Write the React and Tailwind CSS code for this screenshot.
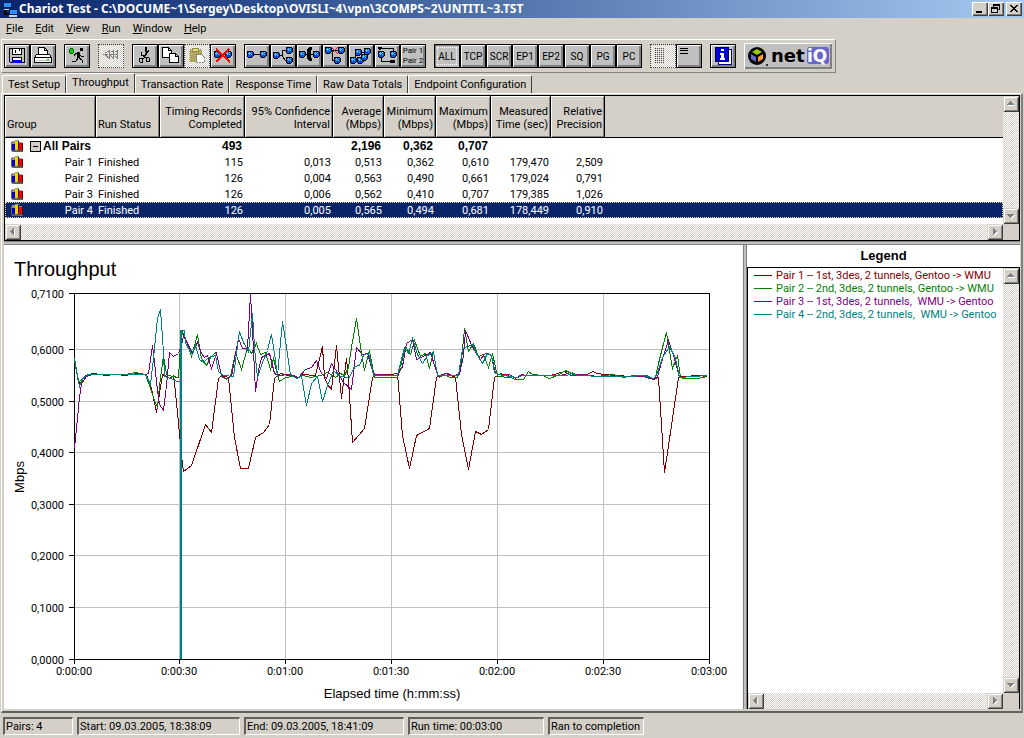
import { useState } from 'react';

const MENUS = ['File', 'Edit', 'View', 'Run', 'Window', 'Help'];
const TABS = ['Test Setup', 'Throughput', 'Transaction Rate', 'Response Time', 'Raw Data Totals', 'Endpoint Configuration'];
const FILTERS = ['ALL', 'TCP', 'SCR', 'EP1', 'EP2', 'SQ', 'PG', 'PC'];

const COLUMNS = [
  { label: 'Timing Records\nCompleted', width: 'w-[85px]' },
  { label: '95% Confidence\nInterval', width: 'w-[88px]' },
  { label: 'Average\n(Mbps)', width: 'w-[51px]' },
  { label: 'Minimum\n(Mbps)', width: 'w-[52px]' },
  { label: 'Maximum\n(Mbps)', width: 'w-[55px]' },
  { label: 'Measured\nTime (sec)', width: 'w-[60px]' },
  { label: 'Relative\nPrecision', width: 'w-[54px]' },
];

const TOTALS = ['493', '', '2,196', '0,362', '0,707', '', ''];

const PAIRS = [
  { name: 'Pair 1', values: ['115', '0,013', '0,513', '0,362', '0,610', '179,470', '2,509'] },
  { name: 'Pair 2', values: ['126', '0,004', '0,563', '0,490', '0,661', '179,024', '0,791'] },
  { name: 'Pair 3', values: ['126', '0,006', '0,562', '0,410', '0,707', '179,385', '1,026'] },
  { name: 'Pair 4', values: ['126', '0,005', '0,565', '0,494', '0,681', '178,449', '0,910'] },
];

const LEGEND = [
  { text: 'Pair 1 -- 1st, 3des, 2 tunnels, Gentoo -> WMU', color: 'text-[#800000]' },
  { text: 'Pair 2 -- 2nd, 3des, 2 tunnels, Gentoo -> WMU', color: 'text-[#008000]' },
  { text: 'Pair 3 -- 1st, 3des, 2 tunnels,  WMU -> Gentoo', color: 'text-[#800080]' },
  { text: 'Pair 4 -- 2nd, 3des, 2 tunnels,  WMU -> Gentoo', color: 'text-[#008080]' },
];

const STATUS = [
  { text: 'Pairs: 4', width: 'w-[70px]' },
  { text: 'Start: 09.03.2005, 18:38:09', width: 'w-[163px]' },
  { text: 'End: 09.03.2005, 18:41:09', width: 'w-[160px]' },
  { text: 'Run time: 00:03:00', width: 'w-[136px]' },
  { text: 'Ran to completion', width: 'w-[96px]' },
];

// y position of every gridline and its label
const Y_TICKS = [
  [293, '0,7100'], [349, '0,6000'], [401, '0,5000'], [452, '0,4000'],
  [504, '0,3000'], [555, '0,2000'], [607, '0,1000'], [659, '0,0000'],
];
const X_TICKS = [
  [74, '0:00:00'], [179, '0:00:30'], [285, '0:01:00'], [391, '0:01:30'],
  [497, '0:02:00'], [603, '0:02:30'], [709, '0:03:00'],
];

const SERIES = [
  {
    color: '#800000',
    points: '74,361 79,384 85,375 92,373 100,374 105,375 115,374 125,375 136,373 146,374 151,388 156,412 162,374 166,376 169,378 173,375 174,382 179,433 181,455 183,471 191,465 205,424 211,432 218,378 221,375 228,377 234,437 240,468 248,468 255,437 263,432 269,424 274,378 280,373 288,375 298,377 302,374 315,375 322,346 324,377 327,384 331,389 336,345 341,398 346,358 348,380 352,442 364,428 372,377 375,375 390,374 397,373 402,435 409,468 416,435 429,428 436,377 438,375 447,373 455,377 461,434 468,469 475,431 481,434 488,429 494,377 500,373 510,376 517,377 522,375 550,375 564,371 571,375 587,374 592,371 597,373 603,374 630,376 647,376 653,379 658,377 664,472 671,425 678,377 683,376 698,375 707,376',
  },
  {
    color: '#008000',
    points: '74,360 78,382 85,376 92,374 105,374 125,374 135,372 145,374 150,388 154,400 157,407 159,385 163,355 166,374 172,376 178,377 180,345 182,331 185,338 191,356 197,334 201,358 206,365 210,357 215,352 217,357 221,376 226,379 230,376 235,352 241,369 247,347 251,353 256,343 260,354 265,352 270,369 273,358 276,370 279,381 285,377 292,376 298,377 303,375 310,377 320,375 327,372 335,377 340,373 344,375 348,367 351,347 356,318 361,353 364,370 367,357 369,351 374,377 397,377 400,367 405,346 410,354 414,340 420,356 425,353 429,368 433,351 437,375 439,377 443,374 450,377 457,377 460,370 464,328 468,351 473,343 478,356 483,354 488,367 492,353 497,376 510,377 515,379 523,379 528,371 532,374 542,375 549,378 557,375 565,370 573,374 583,374 597,376 613,374 623,377 633,375 647,375 653,379 655,377 658,363 662,347 666,332 669,350 672,368 677,355 680,377 683,378 697,378 702,377 706,376',
  },
  {
    color: '#800080',
    points: '74,448 79,397 81,383 86,376 92,374 105,374 145,374 148,373 152,345 154,362 157,390 159,404 163,410 166,385 169,352 173,356 178,353 181,345 183,335 187,343 192,353 197,342 201,353 204,357 207,355 211,368 216,353 221,375 225,378 231,376 235,353 238,338 242,348 247,348 250,294 252,330 255,391 258,370 261,357 269,353 274,373 278,375 290,374 298,377 305,369 311,367 316,360 321,373 326,378 331,363 337,372 343,382 351,389 353,373 356,347 362,354 367,353 371,367 374,374 397,375 402,366 406,343 412,339 416,359 423,356 430,352 435,368 438,376 445,373 452,375 459,374 463,355 465,330 472,347 480,359 485,353 491,355 495,373 503,375 509,374 515,378 521,374 525,375 560,375 567,373 571,375 583,374 597,376 617,376 643,376 653,379 657,376 663,355 668,340 673,355 679,377 690,376 707,375',
  },
  {
    color: '#008080',
    points: '74,358 79,386 83,377 88,374 105,374 145,374 150,384 153,358 157,318 160,309 163,352 164,376 170,378 177,381 181,381 181,330 184,330 185,343 192,354 195,345 199,359 203,362 208,357 215,355 218,371 223,375 233,376 236,353 239,331 243,342 248,351 252,313 254,347 257,377 262,362 267,350 271,334 275,360 277,376 279,353 282,321 286,347 290,375 297,378 301,375 306,405 311,383 317,376 322,401 327,385 333,370 340,376 349,377 354,366 359,365 363,355 368,352 373,375 397,375 400,363 404,347 408,353 412,338 417,354 422,363 427,355 433,352 437,375 458,375 462,348 472,344 477,355 482,363 487,353 491,355 494,372 498,374 510,376 517,377 522,375 567,375 572,372 577,375 603,376 630,376 643,375 653,378 656,375 662,357 669,346 675,358 679,377 693,376 707,375',
  },
];

function Node({ x, y }) {
  return (
    <g>
      <path d={`M${x - 2} ${y - 3}h4l1 1v4l-1 1h-4l-1 -1v-4z`} fill="#0a50e0" stroke="#000" />
      <path d={`M${x - 2} ${y - 1}h1v-1h1v1h1v-1h1v1h-1v1h1v1h-1v-1h-1v1h-1v-1h-1z`} fill="#50c0ff" />
    </g>
  );
}

const ICONS = {
  Save: (
    <>
      <path d="M4.5 3.5h15v14h-14l-1 -1z" fill="#c0c0c0" stroke="#000" />
      <path d="M7.5 3.5h9v6h-9z" fill="#fff" stroke="#000" />
      <path d="M10.5 5v3M14.5 4v2" stroke="#000" />
      <path d="M7.5 12.5h9v5h-9z" fill="#fff" stroke="#000" />
      <path d="M8 15h8v3h-8z" fill="#0000ff" />
    </>
  ),
  Print: (
    <>
      <path d="M7.5 10.5v-8h6l3 3v5" fill="#fff" stroke="#000" />
      <path d="M13.5 2.5v3h3" fill="none" stroke="#000" />
      <path d="M3.5 12.5l2 -3h13l2 3v5h-17z" fill="#fff" stroke="#000" />
      <path d="M4 12.5h16" stroke="#000" />
      <path d="M5 15.5h14" stroke="#c0c0c0" />
      <path d="M16 14h2v1h-2z" fill="#00c000" />
    </>
  ),
  Run: (
    <>
      <circle cx="6.5" cy="6" r="2.5" fill="#00d000" stroke="#006000" />
      <path d="M15 3h3v3h-3z" fill="#000" />
      <path d="M13.5 7v6M14 8.5h-3l-2 2M14 9l2 2h3M14 13l3 2v3M13 13l-2 3h-4" fill="none" stroke="#000" />
      <path d="M12 7h3v6h-3z" fill="#000" />
    </>
  ),
  Stop: (
    <path d="M4 9.5h5M6 8l4 -2v7l-4 -3M10 9.5h4M12 7l2 -1v7l-3 -3M15 9.5h3M16 7l2 -1v7l-2 -2" fill="none" stroke="#808080" />
  ),
  Cut: (
    <>
      <path d="M13.5 2v5l-3 7M12.5 2v5M8.5 7v3l5 3M16 5l-3 5h-5" fill="none" stroke="#000" />
      <path d="M6.5 13.5h3v4h-2l-1 -1zM13.5 12.5h2l1 1v3h-3z" fill="none" stroke="#000" />
    </>
  ),
  Copy: (
    <>
      <path d="M3.5 2.5h6l3 3v7h-9z" fill="#fff" stroke="#000" />
      <path d="M9.5 2.5v3h3" fill="none" stroke="#000" />
      <path d="M10.5 8.5h6l3 3v6h-9z" fill="#fff" stroke="#000" />
      <path d="M16.5 8.5v3h3" fill="none" stroke="#000" />
    </>
  ),
  Paste: (
    <>
      <path d="M4.5 4.5h12v12h-12z" fill="#b0a860" stroke="#a8a050" strokeDasharray="1 1" />
      <path d="M7.5 3.5h6v3h-6z" fill="#e8e080" stroke="#908840" />
      <path d="M11.5 9.5h5l3 3v5h-8z" fill="#fff" stroke="#808080" strokeDasharray="2 1" />
    </>
  ),
  Delete: (
    <>
      <path d="M6 9h11" stroke="#000" />
      <Node x={6} y={9} />
      <Node x={17} y={9} />
      <path d="M5 4l14 13M18 4l-13 13" stroke="#ff0000" strokeWidth="2" />
    </>
  ),
  'Add pair': (
    <>
      <path d="M5 9.5h14" stroke="#000" />
      <Node x={5} y={9} />
      <Node x={18} y={9} />
    </>
  ),
  'Add multicast group': (
    <>
      <path d="M6 10.5h5v-5h7M11 10l3 5h4" fill="none" stroke="#000" />
      <Node x={5} y={10} />
      <Node x={18} y={5} />
      <Node x={18} y={15} />
    </>
  ),
  'Add VoIP pair': (
    <>
      <path d="M5 9.5h14" stroke="#000" />
      <path d="M12 2h3v3h-1v8h1v3h-3l-2 -3v-8z" fill="#000" />
      <Node x={5} y={9} />
      <Node x={19} y={9} />
    </>
  ),
  'Remove pair': (
    <>
      <path d="M6 5.5h12M9.5 6v9h5" fill="none" stroke="#000" />
      <Node x={5} y={5} />
      <Node x={18} y={5} />
      <Node x={14} y={15} />
      <path d="M8 2l7 7M15 2l-7 7" stroke="#ff0000" />
    </>
  ),
  'Replicate pairs': (
    <>
      <path d="M4 15l5 -8h9l-5 8z" fill="none" stroke="#000" />
      <Node x={4} y={15} />
      <Node x={11} y={15} />
      <Node x={9} y={7} />
      <Node x={18} y={6} />
      <Node x={15} y={12} />
    </>
  ),
  'Swap endpoints': (
    <>
      <path d="M3 3.5h15.5v3M6.5 13v3.5h12" fill="none" stroke="#000" />
      <path d="M3 2h4l-2 4zM15 15h5v3h-5z" fill="#000" />
      <Node x={6} y={9} />
      <Node x={18} y={9} />
    </>
  ),
  'Grid view': (
    <path d="M4 3.5h9M4 5.5h9M4 7.5h9M4 9.5h9M4 11.5h9M4 13.5h9M4 15.5h9M4 17.5h9" stroke="#505050" strokeDasharray="1 1" />
  ),
  'List view': <path d="M3 3.5h8M3 5.5h8M3 8.5h8" stroke="#000" />,
  About: (
    <>
      <path d="M7 4h13v15h-13z" fill="#fff" stroke="#000080" />
      <path d="M4.5 2.5h13v14h-13z" fill="#0000d8" stroke="#000040" />
      <path d="M10 4h3v2h-3zM9 8h4v5h1v2h-5v-2h1v-3h-1z" fill="#fff" />
    </>
  ),
};

function ToolButton({ label, disabled, pressed, children, onClick }) {
  const face = disabled
    ? 'border-dotted border-[#404040] bg-[repeating-conic-gradient(#fff_0_25%,#d4d0c8_0_50%)] bg-[length:2px_2px]'
    : 'border-black bg-[#c0c0c0]';
  const bevel = disabled ? '' : pressed
    ? 'shadow-[inset_1px_1px_0_#808080]'
    : 'shadow-[inset_1px_1px_0_#fff,inset_-2px_-2px_0_#808080]';
  return (
    <button
      type="button"
      aria-label={label}
      disabled={disabled}
      onClick={onClick}
      className={`relative flex h-6 w-[26px] items-center justify-center border ${face} ${bevel}`}
    >
      {children || (
        <svg viewBox="0 0 24 22" className="h-[22px] w-6 shrink-0" shapeRendering="crispEdges">{ICONS[label]}</svg>
      )}
      {pressed && <span className="absolute inset-[2px] border border-dotted border-white"></span>}
    </button>
  );
}

const ARROWS = {
  up: 'M4 9l3 -4h1l3 4z',
  down: 'M4 6h7l-3 4h-1z',
  left: 'M9 4v7l-4 -3v-1z',
  right: 'M6 4v7l4 -3v-1z',
};

function ScrollButton({ dir }) {
  return (
    <button
      type="button"
      aria-label={`Scroll ${dir}`}
      className="h-4 w-4 shrink-0 bg-[#d4d0c8] shadow-[inset_1px_1px_0_#d4d0c8,inset_-1px_-1px_0_#404040,inset_2px_2px_0_#fff,inset_-2px_-2px_0_#808080]"
    >
      <svg viewBox="0 0 16 16" className="h-4 w-4" shapeRendering="crispEdges">
        <path d={ARROWS[dir]} fill="#fff" transform="translate(1 1)" />
        <path d={ARROWS[dir]} fill="#808080" />
      </svg>
    </button>
  );
}

function ScrollBar({ vertical }) {
  return (
    <div className={`flex justify-between bg-[repeating-conic-gradient(#fff_0_25%,#d4d0c8_0_50%)] bg-[length:2px_2px] ${vertical ? 'w-4 flex-col' : 'h-4'}`}>
      <ScrollButton dir={vertical ? 'up' : 'left'} />
      <ScrollButton dir={vertical ? 'down' : 'right'} />
    </div>
  );
}

function BarsIcon() {
  return (
    <svg viewBox="0 0 12 12" className="h-3 w-3 shrink-0" shapeRendering="crispEdges">
      <path d="M0 2h1v8h11v2h-11l-1 -1z" fill="#606060" />
      <path d="M1 1h3v3h-3zM4 0h4v2h-4zM8 2h3v2h-3z" fill="#909090" />
      <path d="M1 4h3v6h-3z" fill="#0000e0" />
      <path d="M4 1h3v9h-3z" fill="#e8d800" />
      <path d="M8 3h3v7h-3z" fill="#f00000" />
      <path d="M7 1h1v9h-1zM11 3h1v8h-1z" fill="#301000" />
    </svg>
  );
}

function TitleBar() {
  const button = 'flex h-[14px] w-4 items-center justify-center bg-[#d4d0c8] shadow-[inset_1px_1px_0_#fff,inset_-1px_-1px_0_#404040,inset_-2px_-2px_0_#808080]';
  return (
    <header className="flex h-[18px] items-center bg-linear-to-r from-[#0a246a] to-[#a6caf0] pr-[2px] pl-[2px]">
      <svg viewBox="0 0 16 16" className="mr-px h-4 w-4" shapeRendering="crispEdges">
        <path d="M1 1h8v5h-8z" fill="#3090ff" stroke="#002060" />
        <path d="M2 8h7v1h-7z" fill="#d4d0c8" />
        <path d="M3 9v4h4" fill="none" stroke="#000" strokeWidth="2" />
        <path d="M7 8h8v5h-8z" fill="#3090ff" stroke="#002060" />
        <path d="M7 14h8v2h-8z" fill="#d4d0c8" />
      </svg>
      <h1 className="flex-1 truncate font-['Noto_Sans'] text-[12px] leading-[16px] font-bold text-white">
        Chariot Test - C:\DOCUME~1\Sergey\Desktop\OVISLI~4\vpn\3COMPS~2\UNTITL~3.TST
      </h1>
      <button type="button" aria-label="Minimize" className={button}>
        <svg viewBox="0 0 16 14" className="h-[14px] w-4" shapeRendering="crispEdges"><path d="M4 9h6v2h-6z" /></svg>
      </button>
      <button type="button" aria-label="Restore" className={button}>
        <svg viewBox="0 0 16 14" className="h-[14px] w-4" shapeRendering="crispEdges">
          <path d="M5.5 6v-3.5h6v5h-2M3.5 5.5h6v5h-6zM5 3h7M3 6.5h7" fill="none" stroke="#000" />
        </svg>
      </button>
      <button type="button" aria-label="Close" className={`ml-[2px] ${button}`}>
        <svg viewBox="0 0 16 14" className="h-[14px] w-4" shapeRendering="crispEdges">
          <path d="M4 3l7 7M5 3l7 7M11 3l-7 7M12 3l-7 7" stroke="#000" />
        </svg>
      </button>
    </header>
  );
}

function ToolBar({ filter, setFilter }) {
  return (
    <div role="toolbar" className="mx-px mt-px flex h-[34px] w-fit items-center gap-2 border border-[#808080] border-t-white border-l-white pr-[3px] pl-[2px]">
      <div className="flex">
        <ToolButton label="Save" />
        <ToolButton label="Print" />
      </div>
      <ToolButton label="Run" />
      <ToolButton label="Stop" disabled />
      <div className="flex">
        <ToolButton label="Cut" />
        <ToolButton label="Copy" />
        <ToolButton label="Paste" disabled />
        <ToolButton label="Delete" />
      </div>
      <div className="flex">
        <ToolButton label="Add pair" />
        <ToolButton label="Add multicast group" />
        <ToolButton label="Add VoIP pair" />
        <ToolButton label="Remove pair" />
        <ToolButton label="Replicate pairs" />
        <ToolButton label="Swap endpoints" />
        <ToolButton label="Pair names">
          <span className="text-[8px] leading-[10px] whitespace-nowrap">Pair 1<br />Pair 2</span>
        </ToolButton>
      </div>
      <div className="flex">
        {FILTERS.map((name) => (
          <ToolButton key={name} label={name} pressed={filter === name} onClick={() => setFilter(name)}>
            <span className="text-[10px]">{name}</span>
          </ToolButton>
        ))}
      </div>
      <div className="flex">
        <ToolButton label="Grid view" disabled />
        <ToolButton label="List view" />
      </div>
      <ToolButton label="About" />
      <button type="button" aria-label="NetIQ" className="h-[26px] w-[88px] bg-[#c0c0c0] shadow-[inset_1px_1px_0_#fff,inset_-2px_-2px_0_#808080]">
        <svg viewBox="0 0 88 26" className="h-[26px] w-[88px]">
          <circle cx="13" cy="13" r="9" fill="#000" />
          <path d="M13 6l5 3l-5 3l-5 -3z" fill="#99cc00" />
          <path d="M7 11l5 3v5l-5 -3z" fill="#6666cc" />
          <path d="M19 11l-5 3v5l5 -3z" fill="#ff9933" />
          <circle cx="23" cy="22" r="1" fill="#000" />
          <text x="27" y="19" className="font-['DejaVu_Sans'] text-[18px] font-bold">net</text>
          <rect x="63" y="4" width="22" height="17" rx="3" fill="#6666cc" />
          <text x="63" y="19" fill="#fff" className="font-['DejaVu_Sans'] text-[17px] font-bold">iQ</text>
        </svg>
      </button>
    </div>
  );
}

function ResultsTable({ selected, setSelected }) {
  const th = 'h-[42px] border-r border-b border-black bg-[#d4d0c8] px-[2px] pb-[6px] align-bottom font-normal whitespace-pre-line shadow-[inset_1px_1px_0_#fff,inset_-1px_-1px_0_#808080]';
  return (
    <div className="grid grid-cols-[1fr_16px] border border-black bg-white">
      <div className="overflow-hidden pb-[6px]">
        <table className="w-full table-fixed border-separate border-spacing-0 leading-[13px]">
          <thead>
            <tr>
              <th className={`w-[91px] text-left ${th}`}>Group</th>
              <th className={`w-16 text-left ${th}`}>Run Status</th>
              {COLUMNS.map((col) => (
                <th key={col.label} className={`text-right ${col.width} ${th}`}>{col.label}</th>
              ))}
              <th aria-label="Empty" className="border-b border-black bg-[#d4d0c8]"></th>
            </tr>
          </thead>
          <tbody>
            <tr className="h-4 font-['Liberation_Sans'] text-[12px] font-bold">
              <td className="p-0">
                <div className="flex items-center pl-[6px]">
                  <BarsIcon />
                  <button type="button" aria-label="Collapse group" className="ml-[7px] flex h-[11px] w-[11px] shrink-0 items-center justify-center border border-black bg-[#d4d0c8]">
                    <span className="h-px w-[5px] bg-black"></span>
                  </button>
                  <span className="ml-[2px] whitespace-nowrap">All Pairs</span>
                </div>
              </td>
              <td></td>
              {TOTALS.map((value, i) => <td key={i} className="p-0 pr-[3px] text-right">{value}</td>)}
              <td></td>
            </tr>
            {PAIRS.map((pair) => (
              <tr
                key={pair.name}
                onClick={() => setSelected(pair.name)}
                className={`h-4 ${selected === pair.name ? 'bg-[#0a246a] text-white outline-1 -outline-offset-1 outline-[#f5db95] outline-dotted' : ''}`}
              >
                <td className="p-0">
                  <div className="flex items-center justify-between pr-[3px] pl-[6px]"><BarsIcon />{pair.name}</div>
                </td>
                <td className="p-0 pl-[2px]">Finished</td>
                {pair.values.map((value, i) => <td key={i} className="p-0 pr-[2px] text-right">{value}</td>)}
                <td></td>
              </tr>
            ))}
          </tbody>
        </table>
      </div>
      <ScrollBar vertical />
      <ScrollBar />
      <div className="bg-[#d4d0c8]"></div>
    </div>
  );
}

function Chart() {
  return (
    <svg viewBox="4 245 739 464" className="block h-auto w-full" role="img" aria-label="Throughput chart">
      <text x="14" y="276" className="font-['Liberation_Sans'] text-[20px]">Throughput</text>
      <g shapeRendering="crispEdges" stroke="#c0c0c0" fill="none">
        {Y_TICKS.slice(1, -1).map(([y]) => <path key={y} d={`M75 ${y}.5H711`} />)}
        {X_TICKS.slice(1, -1).map(([x]) => <path key={x} d={`M${x}.5 294V659`} />)}
      </g>
      <g shapeRendering="crispEdges" stroke="#000" fill="none">
        {Y_TICKS.map(([y]) => <path key={y} d={`M69 ${y}.5H74`} />)}
        {X_TICKS.map(([x]) => <path key={x} d={`M${x}.5 659V664`} />)}
        <path d="M74.5 293.5H709.5V659.5H74.5z" />
      </g>
      <g fill="none" shapeRendering="crispEdges">
        {SERIES.map((s) => (
          <polyline key={s.color} points={s.points} stroke={s.color} transform="translate(0.5 0.5)" />
        ))}
        <path d="M180.5 330V659" stroke="#008080" strokeWidth="2" />
      </g>
      {Y_TICKS.map(([y, label]) => (
        <text key={y} x="64" y={y + 5} textAnchor="end" className="text-[11px]">{label}</text>
      ))}
      {X_TICKS.map(([x, label]) => (
        <text key={x} x={x} y="675" textAnchor="middle" className="text-[11px]">{label}</text>
      ))}
      <text x="392" y="698" textAnchor="middle" className="font-['Liberation_Sans'] text-[13px]">Elapsed time (h:mm:ss)</text>
      <text x="24" y="477" textAnchor="middle" transform="rotate(-90 24 477)" className="font-['Liberation_Sans'] text-[13px]">Mbps</text>
    </svg>
  );
}

function Legend() {
  return (
    <aside className="flex w-[273px] shrink-0 flex-col bg-white">
      <h2 className="h-[22px] text-center font-['Liberation_Sans'] text-[13px] leading-[22px] font-bold">Legend</h2>
      <div className="grid flex-1 grid-cols-[1fr_16px] grid-rows-[1fr_16px] border-t border-r border-l border-black">
        <ul className="overflow-hidden pt-px pl-[6px] leading-[13px]">
          {LEGEND.map((item) => (
            <li key={item.text} className={`flex items-center gap-1 whitespace-pre ${item.color}`}>
              <span className="w-[18px] shrink-0 border-t border-current"></span>
              {item.text}
            </li>
          ))}
        </ul>
        <ScrollBar vertical />
        <ScrollBar />
        <div className="bg-[#d4d0c8]"></div>
      </div>
    </aside>
  );
}

export default function App() {
  const [tab, setTab] = useState('Throughput');
  const [filter, setFilter] = useState('ALL');
  const [selected, setSelected] = useState('Pair 4');

  return (
    <div className="flex min-h-screen flex-col bg-[#d4d0c8] font-[Roboto,Arial,sans-serif] text-[11px] leading-[13px] text-black">
      <TitleBar />

      <nav className="flex h-5 items-center">
        {MENUS.map((name) => (
          <button key={name} type="button" className="px-[6px]">
            <span className="underline">{name[0]}</span>{name.slice(1)}
          </button>
        ))}
      </nav>

      <ToolBar filter={filter} setFilter={setFilter} />

      <div role="tablist" className="flex h-5 items-end pl-[2px]">
        {TABS.map((name) => (
          <button
            key={name}
            type="button"
            role="tab"
            aria-selected={tab === name}
            onClick={() => setTab(name)}
            className={`rounded-t-[2px] border-t border-r border-l border-t-white border-r-[#404040] border-l-white px-[5px] whitespace-nowrap ${tab === name ? 'h-5 pb-[3px]' : 'h-[18px]'}`}
          >
            {name}
          </button>
        ))}
      </div>

      <main className="mx-px flex flex-1 flex-col border-t border-r-2 border-b-2 border-l border-t-white border-r-[#808080] border-b-[#606060] border-l-white pt-px pr-px pb-[2px] pl-[2px]">
        <ResultsTable selected={selected} setSelected={setSelected} />
        <div className="h-1 border-t border-b border-[#808080] bg-[#c0c0c0]"></div>
        <div className="flex flex-1">
          <section className="min-w-0 flex-1 bg-white">
            <Chart />
          </section>
          <div className="w-1 shrink-0 border-r border-l border-[#808080] bg-[#c0c0c0]"></div>
          <Legend />
        </div>
      </main>

      <footer className="flex h-[25px] items-center gap-1 pl-[3px]">
        {STATUS.map((field) => (
          <div key={field.text} className={`h-[18px] truncate border border-t-2 border-l-2 border-[#606060] border-r-white border-b-white pl-px leading-[15px] ${field.width}`}>
            {field.text}
          </div>
        ))}
      </footer>
    </div>
  );
}
